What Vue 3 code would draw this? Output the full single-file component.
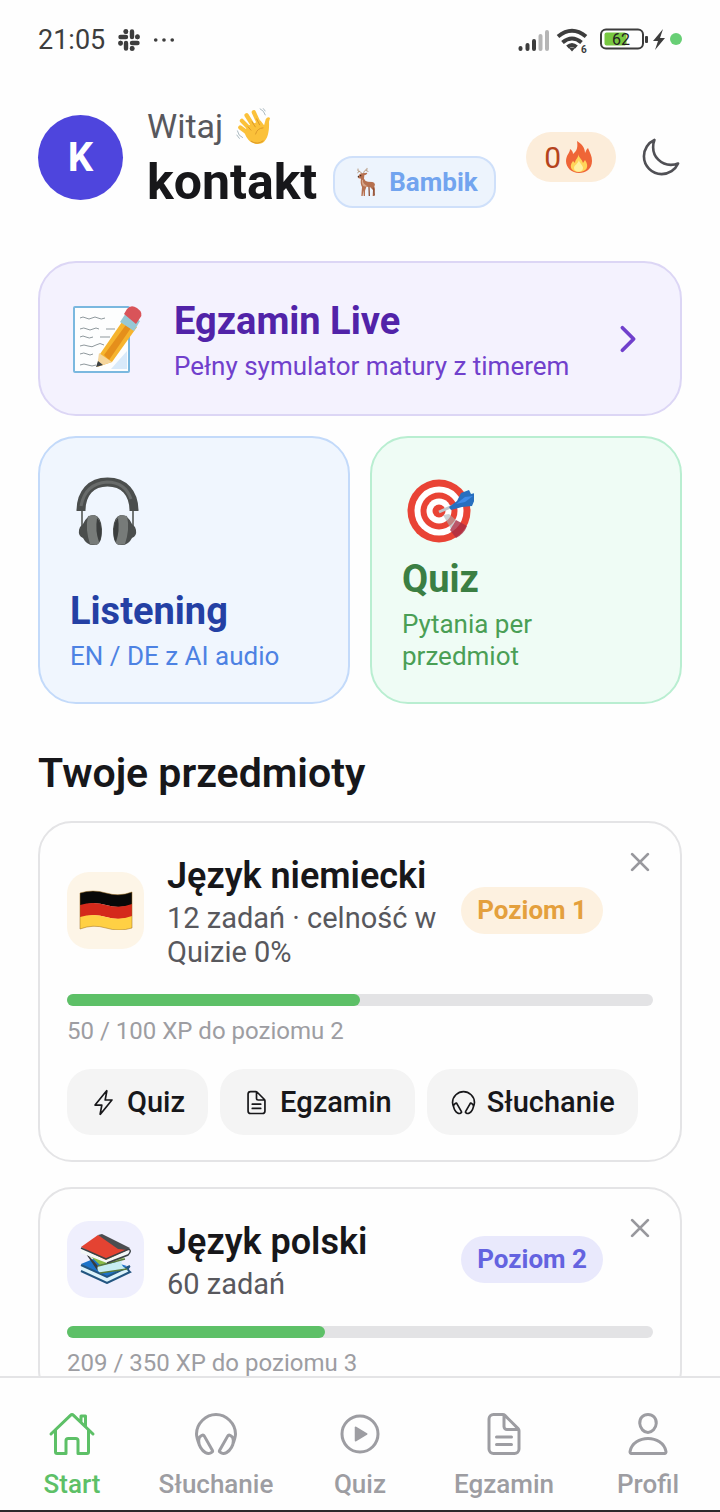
<template>
  <div class="screen">
    <div class="status-bar">
      <span class="clock">21:05</span>
      <svg class="slack" viewBox="0 0 24 24" aria-hidden="true">
        <g fill="none" stroke="#3d3d3d" stroke-width="4.4" stroke-linecap="round">
          <path d="M9 9H3.5M9 3.5v.2M15 9V3.5M20.5 9h-.2M15 15h5.5M15 20.5v-.2M9 15v5.5M3.5 15h.2" />
          <path d="M8.5 3.5h.5M20.5 8.5v.5M15 20.5h.5M3.5 15v.5" />
        </g>
      </svg>
      <svg class="dots" viewBox="0 0 24 24" aria-hidden="true">
        <g fill="#3d3d3d"><circle cx="3" cy="12" r="2" /><circle cx="12" cy="12" r="2" /><circle cx="21" cy="12" r="2" /></g>
      </svg>
      <svg class="signals" viewBox="-2 1 168 32" aria-hidden="true">
        <g stroke-width="4" stroke-linecap="round">
          <path d="M4.5 26v-1M11.5 26v-4M18 26v-8" stroke="#3d3d3d" />
          <path d="M24.5 26V13M31 26V9" stroke="#b5b5b5" />
        </g>
        <g fill="none" stroke="#3d3d3d" stroke-width="4">
          <path d="M42 13.500q14-11.500 28 0M46.500 19.500q9.500-8 19 0M51.500 24q4.500-4 9 0" />
        </g>
        <path d="M52.500 24.500h7L56 28.500z" fill="#3d3d3d" />
        <text x="65" y="30" font-size="10" font-weight="700" fill="#3d3d3d">6</text>
        <g transform="translate(2 0)">
          <rect x="83" y="6.500" width="42" height="19" rx="5" fill="#fff" stroke="#3d3d3d" stroke-width="2" />
          <rect x="86.500" y="9.500" width="22" height="13" rx="2" fill="#78c841" />
          <rect x="127" y="13" width="3" height="7" rx="1" fill="#3d3d3d" />
          <text x="94" y="22" font-size="16" fill="#222">62</text>
          <path d="M145 6l-10 12h5l-3 9 10-12h-5z" fill="#3d3d3d" />
          <circle cx="158" cy="16" r="6" fill="#68cf75" />
        </g>
      </svg>
    </div>

    <main class="content">
      <header class="greeting">
        <div class="avatar">K</div>
        <div class="who">
          <div class="hello">
            Witaj
            <svg class="wave" viewBox="705 318 110 115" aria-hidden="true">
              <g fill="none" stroke="#fbc13a" stroke-width="13" stroke-linecap="round">
                <path d="M783 382l-22-48M766 386l-27-43M758 394l-33-34M751 403l-31-23" />
              </g>
              <path d="M743 375l38-16 11 14 5-18q6-9 13-4l-3 12c1 28-3 67-34 67-22 0-34-15-41-36z" fill="#fbc13a" />
              <path d="M755 362l11 17M769 353l10 20M743 377l10 12M766 401q5-19 24-20M752 421q19 13 38-1" fill="none" stroke="#dc9827" stroke-width="3" />
              <path d="M779 323q13 6 17 20M789 322l7 9M711 389q3 17 17 22M709 402l9 12" fill="none" stroke="#a9b8bf" stroke-width="3" />
            </svg>
          </div>
          <div class="name-row">
            <h1>kontakt</h1>
            <span class="rank">
              <svg class="deer" viewBox="82 46 72 96" aria-hidden="true">
                <path d="M107 70q-4-8-13-9v-6M98 62l-5 4M111 69q-1-10 10-12v-4M117 59l7 3" fill="none" stroke="#b79a80" stroke-width="3" stroke-linecap="round" />
                <path d="M95 75q6-9 14-7l12-2q3 4-8 8l-1 10q3 8 12 9l13 1q7 0 8 8l-2 5 2 9-3 20h-4l1-18-9-9-11 0-4 11v16h-4l-1-17-2 17h-4l2-27q-6-10-3-25l-7-1q-4-3-1-7z" fill="#b6704f" />
                <path d="M106 87q-2 13 5 20l14 2-9-7q-8-4-7-14z" fill="#d7a68b" />
                <path d="M127 109l1 27M140 111l3 24" fill="none" stroke="#8f5038" stroke-width="4" />
                <circle cx="102" cy="75" r="2" fill="#2b1d19" /><circle cx="95" cy="78" r="2" fill="#2b1d19" />
              </svg>
              Bambik
            </span>
          </div>
        </div>
        <div class="streak">
          0
          <svg class="fire" viewBox="0 0 26 32" aria-hidden="true">
            <path d="M11 0c5 3 8 7 8 12 1-2 1-3 3-5 2 5 4 8 4 13 0 8-6 12-13 12S0 27 0 20c0-6 4-8 4-12 2 1 3 3 3 5 4-3 5-7 4-13z" fill="#ef6537" />
            <path d="M12 13c1 4 4 5 5 9l2-3c5 7 1 12-6 12S2 26 7 20l2 2c0-4 4-5 3-9z" fill="#ffd45a" />
            <path d="M13 19c0 3 4 5 4 8 0 5-9 5-9 0 0-3 4-4 5-8z" fill="#fff0a1" />
          </svg>
        </div>
        <button class="theme" type="button" aria-label="Tryb ciemny">
          <svg viewBox="0 0 512 512" class="line"><path :d="icons.moon" /></svg>
        </button>
      </header>

      <section class="modes">
        <a class="mode exam" href="#egzamin">
          <svg class="emoji" viewBox="0 0 72 72" aria-hidden="true">
            <rect x="2" y="4" width="55" height="65" rx="1" fill="#fdfefe" stroke="#7ab8df" stroke-width="2" />
            <path d="M55 48v18H39z" fill="#d9eafa" />
            <path d="M8 15q3-2 6 0t6 0 6 0 7 0M8 26q4-2 7 0t6 0 6 0M34 26h9M8 34q3-2 6 0t7 0M28 34h10M8 43q4-2 8 0t8-1 8 0M8 51q4-2 7 0t6 0M8 62q4-2 8 0t8 0" fill="none" stroke="#8f999d" stroke-width="1" />
            <path d="M28 51L52 16l13 8-25 35-15 5z" fill="#f6b42e" />
            <path d="M32 52l24-33 5 3-24 35z" fill="#e58f1b" />
            <path d="M27 50l13 9-15 5z" fill="#f5d69d" /><path d="M26 58l5 4-7 2z" fill="#3d4245" />
            <path d="M48 19l6-9 14 8-6 10z" fill="#97c8d5" />
            <path d="M52 11l3-5q4-5 10-1 7 5 3 10l-4 6z" fill="#d95459" />
          </svg>
          <span class="mode-text">
            <strong>Egzamin Live</strong>
            <span class="hint">Pełny symulator matury z timerem</span>
          </span>
          <svg class="chevron" viewBox="0 0 512 512" aria-hidden="true"><path d="M184 112l144 144-144 144" /></svg>
        </a>

        <a class="mode tile listening" href="#sluchanie">
          <svg class="emoji" viewBox="0 0 72 72" aria-hidden="true">
            <path d="M12 35v15M63 35v15" stroke="#737776" stroke-width="2" />
            <path d="M11 35C11 17 21 6 37.500 6S64 17 64 35" fill="none" stroke="#4b4e4d" stroke-width="9" />
            <path d="M11 30C14 14 23 7 37 6q18 0 24 17" fill="none" stroke="#686b6a" stroke-width="3" />
            <path d="M24 39q7 1 8 14 0 16-7 16-8 1-12-7-5-2-4-8 1-4 4-6 4-9 11-9zM51 39q-7 1-8 14 0 16 7 16 8 1 12-7 5-2 4-8-1-4-4-6-4-9-11-9z" fill="#4b4e4d" />
            <path d="M18 40q-3 13 2 28l6 1q5-1 5-15-1-14-7-15zM57 40q3 13-2 28l-6 1q-5-1-5-15 1-14 7-15z" fill="#777b79" />
            <path d="M27 42q-2 13 2 24 3-3 2-13 0-7-4-11zM48 42q2 13-2 24-3-3-2-13 0-7 4-11z" fill="#3b3e3e" />
          </svg>
          <strong>Listening</strong>
          <span class="hint">EN / DE z AI audio</span>
        </a>

        <a class="mode tile quiz" href="#quiz">
          <svg class="emoji" viewBox="0 0 72 72" aria-hidden="true">
            <circle cx="37" cy="35" r="31.500" fill="#e94335" /><circle cx="37" cy="35" r="24.500" fill="#fff" />
            <circle cx="37" cy="35" r="18.500" fill="#e94335" /><circle cx="37" cy="35" r="12.500" fill="#fff" /><circle cx="37" cy="35" r="6.500" fill="#e94335" />
            <path d="M41 39l6-1 7 6-5 9z" fill="#aab0b4" opacity=".6" />
            <path d="M54 44l11 6q-3 8-11 12l-6-8z" fill="#a92d43" opacity=".8" />
            <path d="M37 36l16-7" stroke="#c1c5c9" stroke-width="3" />
            <path d="M47 31l8-6 4-8 8-3 2 4 4-1-1 4 1 2-3 7-10 1-11 3z" fill="#286fbf" /><path d="M54 28l9-7 8-1-8 6z" fill="#3f8be8" />
          </svg>
          <strong>Quiz</strong>
          <span class="hint">Pytania per przedmiot</span>
        </a>
      </section>

      <h2>Twoje przedmioty</h2>

      <article v-for="subject in subjects" :key="subject.id" class="subject">
        <button class="remove" type="button" :aria-label="`Usuń ${subject.name}`">
          <svg viewBox="0 0 512 512"><path d="M368 368L144 144M368 144L144 368" /></svg>
        </button>
        <div class="subject-head">
          <div class="thumb" :class="subject.theme">
            <svg v-if="subject.id === 'de'" viewBox="0 0 54 40" aria-hidden="true">
              <path d="M1 3q13-4 26 0t26-1v13q-13 4-26 0T1 16z" fill="#080808" />
              <path d="M1 15q13-4 26 0t26-1v13q-13 4-26 0T1 28z" fill="#d4291b" />
              <path d="M1 27q13-4 26 0t26-1v12q-13 4-26 0T1 39z" fill="#ffd044" />
              <path d="M1 3q13-4 26 0t26-1v36q-13 4-26 0T1 39z" fill="none" stroke="#9b6c20" stroke-opacity=".5" />
            </svg>
            <svg v-else viewBox="0 0 52 50" class="books" aria-hidden="true">
              <path d="M1 30l17-7 32 10-24 12z" fill="#1c73c9" /><path d="M1 31v6l26 12 22-11-2-6-20 11z" fill="#dcf3fb" />
              <path d="M1 37l26 12 23-11q-4-3 0-6M1 31l26 12 23-11" fill="none" stroke="#235681" stroke-width="2" />
              <path d="M2 14l15 17 6 8-6-3z" fill="#373c3e" /><path d="M7 19l13 12 25-7-19-6z" fill="#8abd48" />
              <path d="M18 32l24-5q-2 4 4 8l-25 4q-5-2-3-7z" fill="#c7edf2" /><path d="M18 32l27-7M20 39l27-4" stroke="#597b3b" stroke-width="1.500" />
              <path d="M1 13L18 1l31 15-24 10z" fill="#e44332" /><path d="M18 1l4-1 28 14-3 2-9-1z" fill="#4b4d50" />
              <path d="M1 14v5l26 10 22-9-1-4-22 10z" fill="#f4f7f7" />
              <path d="M1 14l25 11 23-10q3 2-1 6l-21 8" fill="none" stroke="#3c4246" stroke-width="1.500" />
            </svg>
          </div>
          <div class="info">
            <h3>{{ subject.name }}</h3>
            <p>{{ subject.summary }}</p>
          </div>
          <span class="level" :class="subject.theme">Poziom {{ subject.level }}</span>
        </div>
        <div class="track">
          <div class="fill" :style="{ width: subject.progress + '%' }"></div>
        </div>
        <p class="xp">{{ subject.xp }} / {{ subject.goal }} XP do poziomu {{ subject.level + 1 }}</p>
        <div v-if="subject.actions.length" class="actions">
          <button v-for="action in subject.actions" :key="action.label" type="button">
            <svg viewBox="0 0 512 512" class="line"><path :d="icons[action.icon]" /></svg>
            {{ action.label }}
          </button>
        </div>
      </article>
    </main>

    <nav class="tabs">
      <a v-for="tab in tabs" :key="tab.label" :href="tab.href" :class="{ active: tab.label === activeTab }" @click="activeTab = tab.label">
        <svg viewBox="0 0 512 512" class="line">
          <path :d="icons[tab.icon]" />
          <path v-if="tab.icon === 'play'" class="solid" d="M216 334l115-69a11 11 0 000-18l-115-69a11 11 0 00-16 9v138a11 11 0 0016 9z" />
        </svg>
        <span>{{ tab.label }}</span>
      </a>
    </nav>
  </div>
</template>

<script setup>
import { ref } from 'vue'

const icons = {
  home: 'M80 212v236a16 16 0 0016 16h96V328a24 24 0 0124-24h80a24 24 0 0124 24v136h96a16 16 0 0016-16V212M480 256L266.890 52c-5-5.280-16.690-5.340-21.780 0L32 256M400 179V64h-48v69',
  headset: 'M83 384c-13-33-35-93.370-35-128C48 141.120 149.330 48 256 48s208 93.120 208 208c0 34.630-23 97-35 128M108.390 270.130l-13.690 8c-30.230 17.700-31.700 72.410-3.380 122.200s75.870 75.840 106.100 58.130l13.690-8a16.160 16.160 0 005.780-21.870L130 276a15.740 15.740 0 00-21.610-5.870zM403.610 270.130l13.690 8c30.230 17.690 31.740 72.400 3.380 122.190s-75.870 75.840-106.100 58.130l-13.690-8a16.160 16.160 0 01-5.780-21.870L382 276a15.740 15.740 0 0121.610-5.870z',
  play: 'M448 256c0-106-86-192-192-192S64 150 64 256s86 192 192 192 192-86 192-192z',
  doc: 'M416 221.250V416a48 48 0 01-48 48H144a48 48 0 01-48-48V96a48 48 0 0148-48h98.750a32 32 0 0122.620 9.370l141.260 141.260a32 32 0 019.370 22.620zM256 56v120a32 32 0 0032 32h120M176 288h160M176 368h160',
  person: 'M344 144c-3.920 52.870-44 96-88 96s-84.150-43.120-88-96c-4-55 35-96 88-96s92 42 88 96zM256 304c-87 0-175.300 48-191.640 138.600C62.390 453.520 68.570 464 80 464h352c11.440 0 17.620-10.480 15.650-21.400C431.300 352 343 304 256 304z',
  flash: 'M315.270 33L96 304h128l-31.510 173.230a2.360 2.360 0 004.220 1.820L416 208H288l31.660-173.250a2.450 2.450 0 00-4.390-1.750z',
  moon: 'M160 136c0-30.620 4.510-61.610 16-88C99.570 81.270 48 159.320 48 248c0 119.290 96.710 216 216 216 88.680 0 166.730-51.570 200-128-26.390 11.490-57.380 16-88 16-119.290 0-216-96.710-216-216z',
}

const languageActions = [
  { label: 'Quiz', icon: 'flash' },
  { label: 'Egzamin', icon: 'doc' },
  { label: 'Słuchanie', icon: 'headset' },
]

const subjects = [
  { id: 'de', name: 'Język niemiecki', summary: '12 zadań · celność w Quizie 0%', level: 1, xp: 50, goal: 100, progress: 50, theme: 'amber', actions: languageActions },
  { id: 'pl', name: 'Język polski', summary: '60 zadań', level: 2, xp: 209, goal: 350, progress: 44, theme: 'indigo', actions: [] },
]

const tabs = [
  { label: 'Start', icon: 'home', href: '#start' },
  { label: 'Słuchanie', icon: 'headset', href: '#sluchanie' },
  { label: 'Quiz', icon: 'play', href: '#quiz' },
  { label: 'Egzamin', icon: 'doc', href: '#egzamin' },
  { label: 'Profil', icon: 'person', href: '#profil' },
]

const activeTab = ref('Start')
</script>

<style>
body {
  margin: 0;
  background: #fefefe;
}
</style>

<style scoped>
.screen {
  display: flex;
  flex-direction: column;
  height: 100vh;
  box-sizing: border-box;
  overflow: hidden;
  border-bottom: 2px solid #2b282c;
  background: #fefefe;
  color: #17171a;
  font-family: Roboto, 'Noto Sans', sans-serif;
}
h1,
h2,
h3,
p {
  margin: 0;
}
a {
  text-decoration: none;
}
button {
  padding: 0;
  border: 0;
  background: none;
  color: inherit;
  font-family: inherit;
  cursor: pointer;
}
svg {
  flex-shrink: 0;
}
.line {
  fill: none;
  stroke: currentColor;
  stroke-width: 32;
  stroke-linecap: round;
  stroke-linejoin: round;
}
.line .solid {
  fill: currentColor;
  stroke: none;
}
.status-bar {
  display: flex;
  flex-shrink: 0;
  align-items: center;
  gap: 12px;
  height: 80px;
  padding: 0 38px;
  color: #3d3d3d;
}
.clock {
  font-size: 27px;
}
.slack {
  width: 24px;
  height: 24px;
}
.dots {
  width: 22px;
  height: 22px;
}
.signals {
  width: 168px;
  height: 32px;
  margin-left: auto;
}
.content {
  flex: 1;
  min-height: 0;
  padding: 21px 38px 0;
  overflow-y: auto;
  scrollbar-width: none;
}
.greeting {
  display: flex;
  align-items: center;
}
.avatar {
  flex-shrink: 0;
  width: 85px;
  margin-right: 24px;
  border-radius: 50%;
  background: #4e45dd;
  color: #fff;
  font-size: 40px;
  font-weight: 700;
  line-height: 85px;
  text-align: center;
}
.who {
  flex: 1;
}
.hello {
  display: flex;
  align-items: center;
  gap: 12px;
  color: #58585d;
  font-size: 34px;
  line-height: 50px;
}
.wave {
  width: 37px;
  height: 38px;
}
.name-row {
  display: flex;
  align-items: center;
  gap: 16px;
}
h1 {
  font-size: 50px;
  font-weight: 700;
  line-height: 62px;
}
.rank {
  display: flex;
  align-items: center;
  gap: 11px;
  box-sizing: border-box;
  height: 52px;
  padding: 0 16px 0 19px;
  border: 2px solid #cfe0fa;
  border-radius: 20px;
  background: #edf4fd;
  color: #72a4ef;
  font-size: 26px;
  font-weight: 700;
}
.deer {
  width: 24px;
  height: 32px;
}
.streak {
  display: flex;
  align-items: center;
  gap: 5px;
  height: 50px;
  padding: 0 24px 0 18px;
  border-radius: 25px;
  background: #fcedda;
  color: #b5431c;
  font-size: 30px;
}
.fire {
  width: 26px;
  height: 32px;
}
.theme {
  margin-left: 24px;
  color: #505055;
}
.theme svg {
  display: block;
  width: 42px;
  height: 42px;
}
.modes {
  display: grid;
  grid-template-columns: 1fr 1fr;
  gap: 20px;
  margin-top: 48px;
}
.mode {
  display: flex;
  padding: 32px;
  border: 2px solid;
  border-radius: 38px;
  box-sizing: border-box;
}
.mode strong {
  font-size: 38px;
  font-weight: 700;
  line-height: 50px;
}
.hint {
  font-size: 26px;
  line-height: 32px;
}
.emoji {
  width: 72px;
  height: 72px;
}
.exam {
  grid-column: 1 / -1;
  align-items: center;
  gap: 30px;
  height: 155px;
  border-color: #dcd6f5;
  background: #f4f2fe;
}
.mode-text {
  display: flex;
  flex: 1;
  flex-direction: column;
  gap: 4px;
}
.exam strong {
  color: #5123a8;
}
.exam .hint,
.chevron {
  color: #7040cc;
}
.chevron {
  width: 40px;
  height: 40px;
  fill: none;
  stroke: currentColor;
  stroke-width: 48;
  stroke-linecap: round;
  stroke-linejoin: round;
}
.tile {
  flex-direction: column;
  height: 268px;
  padding: 30px;
}
.tile .emoji {
  margin: 8px 0 auto;
}
.tile .hint {
  margin-top: 4px;
}
.listening {
  border-color: #c3dafa;
  background: #f0f6fe;
}
.listening strong {
  color: #2440a4;
}
.listening .hint {
  color: #4d82e3;
}
.quiz {
  border-color: #b9eed1;
  background: #effcf5;
}
.quiz strong {
  color: #3b7f43;
}
.quiz .hint {
  max-width: 220px;
  color: #4a9f55;
}
h2 {
  margin: 44px 0 23px;
  font-size: 41px;
  font-weight: 600;
  line-height: 50px;
}
.subject {
  position: relative;
  margin-bottom: 25px;
  padding: 28px 27px 25px;
  border: 2px solid #e4e4e6;
  border-radius: 34px;
}
.remove {
  position: absolute;
  top: 21px;
  right: 22px;
  color: #98989d;
}
.remove svg {
  display: block;
  width: 36px;
  height: 36px;
  fill: none;
  stroke: currentColor;
  stroke-width: 40;
  stroke-linecap: round;
}
.subject-head {
  display: flex;
  align-items: center;
  padding-right: 50px;
}
.thumb {
  display: flex;
  flex-shrink: 0;
  align-items: center;
  justify-content: center;
  width: 77px;
  height: 77px;
  margin-right: 23px;
  border-radius: 22px;
}
.thumb svg {
  width: 54px;
  height: 40px;
}
.thumb .books {
  height: 50px;
}
.thumb.amber {
  background: #fdf5e7;
}
.thumb.indigo {
  background: #efeffd;
}
.info {
  flex: 1;
}
h3 {
  font-size: 36px;
  font-weight: 600;
  line-height: 50px;
}
.info p {
  color: #58585d;
  font-size: 29px;
  line-height: 34px;
}
.level {
  flex-shrink: 0;
  margin-left: 16px;
  padding: 0 16px;
  border-radius: 24px;
  font-size: 26px;
  font-weight: 700;
  line-height: 47px;
}
.level.amber {
  background: #fdf1e0;
  color: #e4a03d;
}
.level.indigo {
  background: #e9e9fc;
  color: #6463e0;
}
.track {
  height: 12px;
  margin-top: 25px;
  border-radius: 6px;
  background: #e3e3e5;
}
.fill {
  height: 100%;
  border-radius: 6px;
  background: #5dc067;
}
.xp {
  margin-top: 11px;
  color: #9d9da2;
  font-size: 24px;
  line-height: 28px;
}
.actions {
  display: flex;
  gap: 12px;
  margin-top: 24px;
}
.actions button {
  display: flex;
  align-items: center;
  gap: 10px;
  height: 66px;
  padding: 0 23px;
  border-radius: 24px;
  background: #f4f4f4;
  font-size: 29px;
  font-weight: 500;
}
.actions svg {
  width: 27px;
  height: 27px;
}
.tabs {
  display: flex;
  flex-shrink: 0;
  height: 132px;
  border-top: 2px solid #e4e4e6;
  background: #fefefe;
}
.tabs a {
  display: flex;
  flex: 1;
  flex-direction: column;
  align-items: center;
  gap: 10px;
  padding-top: 32px;
  color: #9d9da2;
  font-size: 26px;
  font-weight: 500;
  line-height: 32px;
}
.tabs svg {
  width: 48px;
  height: 48px;
}
.tabs .active {
  color: #5dc067;
}
</style>
